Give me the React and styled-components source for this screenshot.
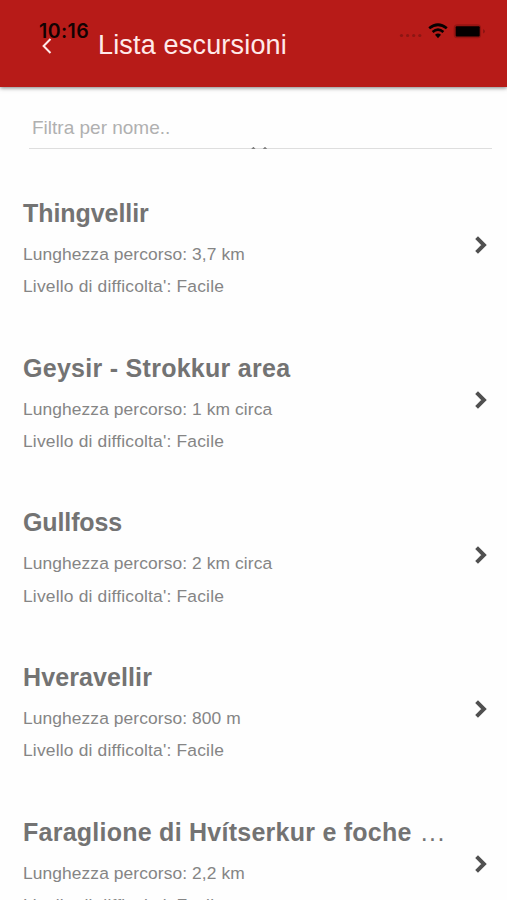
import React from 'react'
import styled, { createGlobalStyle } from 'styled-components'

const hikes = [
    {name: 'Thingvellir', length: '3,7 km', level: 'Facile', spacing: -0.06},
    {name: 'Geysir - Strokkur area', length: '1 km circa', level: 'Facile', spacing: 0.28},
    {name: 'Gullfoss', length: '2 km circa', level: 'Facile', spacing: -0.12},
    {name: 'Hveravellir', length: '800 m', level: 'Facile', spacing: 0.1},
    {name: 'Faraglione di Hvítserkur e foche', length: '2,2 km', level: 'Facile', spacing: 0.25, isTruncated: true},
]

const StatusBar = () => (
    <StatusContainer>
        <Clock>10:16</Clock>
        <StatusIcons width='90' height='22' viewBox='0 0 90 22'>
            <g fill='#8c1613'>
                <circle cx='4.5' cy='15.5' r='1.6' />
                <circle cx='10.6' cy='15.5' r='1.6' />
                <circle cx='16.7' cy='15.5' r='1.6' />
                <circle cx='22.8' cy='15.5' r='1.6' />
            </g>
            <g fill='none' stroke='#080101' strokeWidth='2.7'>
                <path d='M32.2 8.3 Q41 1.2 49.8 8.3' />
                <path d='M35.6 12 Q41 7.4 46.4 12' />
            </g>
            <path d='M38 14.7 Q41 12.3 44 14.7 L41 18.3 Z' fill='#080101' />
            <rect x='56.7' y='4.3' width='27.4' height='14' rx='3.6' fill='#981512' />
            <rect x='58.7' y='6.2' width='24' height='10.3' rx='1' fill='#040000' />
            <path d='M86.4 9 Q89 11.3 86.4 13.6 Z' fill='#74100e' />
        </StatusIcons>
    </StatusContainer>
)

const HikeItem = ({hike}) => (
    <ItemRow>
        <ItemBody>
            <ItemTitle $spacing={hike.spacing}>
                {hike.name}
                {hike.isTruncated && <Ellipsis>...</Ellipsis>}
            </ItemTitle>
            <ItemDetail $spacing={0.09}>Lunghezza percorso: {hike.length}</ItemDetail>
            <ItemDetail $spacing={0.19}>Livello di difficolta': {hike.level}</ItemDetail>
        </ItemBody>
        <svg width='14' height='20' viewBox='0 0 14 20'>
            <path d='M2.6 2.6 L10 10 L2.6 17.4' fill='none' stroke='#505050' strokeWidth='3.9' />
        </svg>
    </ItemRow>
)

export default function App() {
    return (
        <Page>
            <GlobalStyle />
            <Header>
                <StatusBar />
                <BackButton aria-label='Indietro'>
                    <svg width='12' height='18' viewBox='0 0 12 18'>
                        <path d='M9.5 2 L2.6 9 L9.5 16' fill='none' stroke='#ffeaea' strokeWidth='2' />
                    </svg>
                </BackButton>
                <HeaderTitle>Lista escursioni</HeaderTitle>
            </Header>
            <SearchContainer>
                <SearchInput placeholder='Filtra per nome..' />
                <Refresher width='18' height='4' viewBox='0 0 18 4'>
                    <path d='M1.2 2.8 L3.4 1 L5.6 2.8 Z M12.8 2.8 L15 1 L17.2 2.8 Z' fill='#606060' />
                </Refresher>
            </SearchContainer>
            <List>
                {hikes.map(hike => <HikeItem key={hike.name} hike={hike} />)}
            </List>
        </Page>
    )
}

const GlobalStyle = createGlobalStyle`
    * {
        box-sizing: border-box;
    }
    body {
        margin: 0;
        background: #fefefe;
        overflow: hidden;
        font-family: 'Liberation Sans', Arial, sans-serif;
    }
`

const Page = styled.div`
    display: flex;
    flex-direction: column;
    height: 900px;
    overflow: hidden;
`

const Header = styled.header`
    position: relative;
    flex: none;
    display: flex;
    align-items: center;
    height: 87px;
    padding: 2px 0 0 40px;
    background: #b71b18;
    box-shadow: 0 1px 4px rgba(0, 0, 0, 0.5);
`

const StatusContainer = styled.div`
    position: absolute;
    top: 20px;
    left: 39px;
    right: 20px;
    display: flex;
    justify-content: space-between;
    z-index: 1;
    pointer-events: none;
`

const Clock = styled.span`
    font: 600 19.5px/23px Inter, sans-serif;
    letter-spacing: 0.4px;
    color: #120202;
`

const StatusIcons = styled.svg`
    display: block;
`

const BackButton = styled.button`
    display: flex;
    width: 58px;
    padding: 2px 0 0 1px;
    border: 0;
    background: none;
`

const HeaderTitle = styled.h1`
    margin: 0;
    font-size: 27px;
    font-weight: 400;
    line-height: 32px;
    letter-spacing: 0.18px;
    color: #ffeaea;
`

const SearchContainer = styled.div`
    position: relative;
    flex: none;
    height: 81px;
    padding: 19px 15px 0 29px;
`

const SearchInput = styled.input`
    display: block;
    width: 100%;
    height: 43px;
    padding: 2px 3px 0;
    border: 0;
    border-bottom: 1px solid #dedede;
    outline: 0;
    background: transparent;
    font: 19px 'Liberation Sans', Arial, sans-serif;

    &::placeholder {
        color: #b0b0b0;
        opacity: 1;
    }
`

const Refresher = styled.svg`
    position: absolute;
    top: 59px;
    left: 250px;
`

const List = styled.div`
    flex: 1;
    min-height: 0;
`

const ItemRow = styled.div`
    display: flex;
    align-items: center;
    justify-content: space-between;
    height: 154.7px;
    padding: 0 19px 0 23px;
`

const ItemBody = styled.div`
    padding-top: 9px;
`

const ItemTitle = styled.h2`
    margin: 0 0 10px;
    padding-top: 1px;
    font-size: 25px;
    font-weight: 700;
    line-height: 30px;
    letter-spacing: ${p => p.$spacing}px;
    white-space: nowrap;
    color: #737373;
`

const Ellipsis = styled.span`
    margin-left: 9px;
    font-weight: 400;
    letter-spacing: 1.5px;
`

const ItemDetail = styled.p`
    margin: 0;
    font-size: 17.4px;
    line-height: 32.3px;
    letter-spacing: ${p => p.$spacing}px;
    color: #858585;
`
